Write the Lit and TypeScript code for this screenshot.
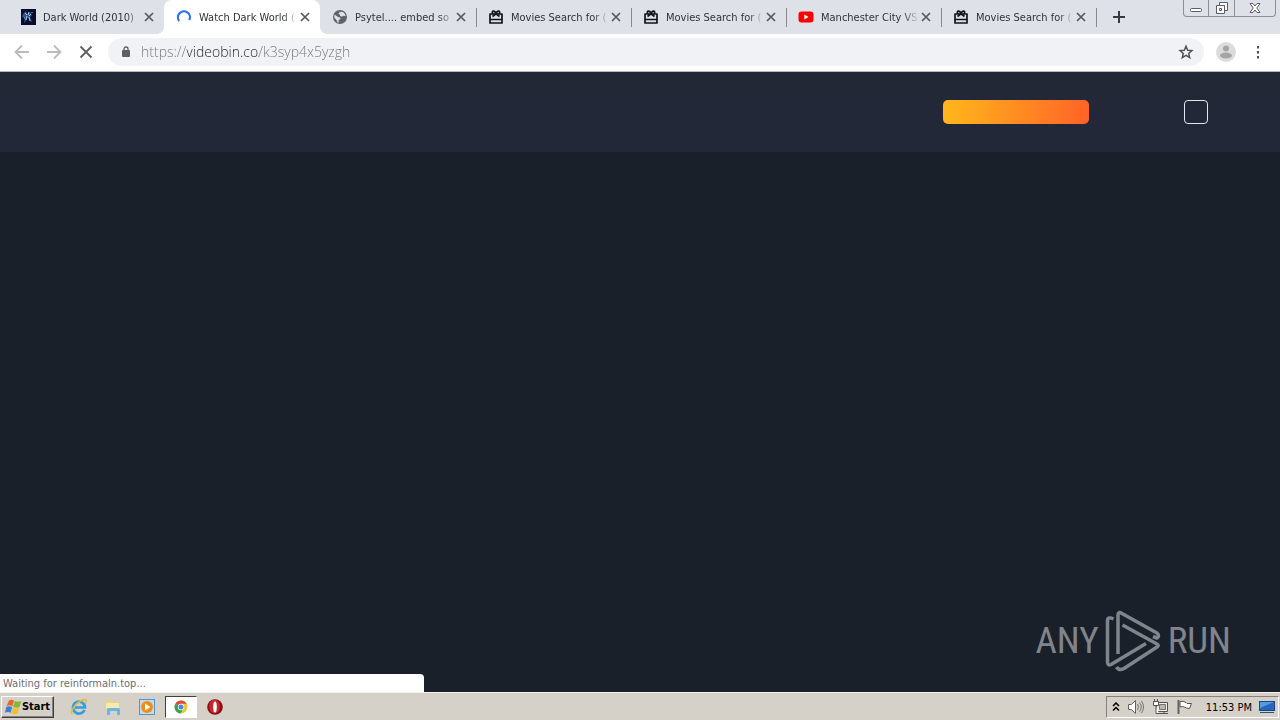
import { LitElement, html, svg, css } from "lit";
import { customElement, property, state } from "lit/decorators.js";
import { classMap } from "lit/directives/class-map.js";

type IconName = "night" | "spinner" | "globe" | "gift" | "youtube";

interface Tab {
  title: string;
  icon: IconName;
}

const TABS: Tab[] = [
  { title: "Dark World (2010)", icon: "night" },
  { title: "Watch Dark World (", icon: "spinner" },
  { title: "Psytel.... embed so", icon: "globe" },
  { title: "Movies Search for (", icon: "gift" },
  { title: "Movies Search for (", icon: "gift" },
  { title: "Manchester City VS", icon: "youtube" },
  { title: "Movies Search for (", icon: "gift" },
];

const favicons: Record<IconName, unknown> = {
  night: svg`<rect x="1" width="15" height="16" fill="#070d2c"/>
    <path d="M3 5l3-3 1 3 3-2 2 3-2 2 2 5-2-1-2-4-2 4-2 2 1-5-3-1z" fill="#31558f"/>
    <path d="M5 4l2 2M9 3l-1 3M11 5l-2 2M7 7l-1 4M9 8l1 4M4 9h1M12 3v1" stroke="#a5c4e6" stroke-width="1" fill="none"/>`,
  spinner: svg`<path d="M3.200 12A6 6 0 1 1 13.300 11" fill="none" stroke="#2a74e6" stroke-width="2.2"/>`,
  globe: svg`<circle cx="8" cy="8" r="7" fill="#5f6368"/>
    <path d="M2.500 5.500L6 8l2 .5.500 1.500-2 1 .3 2.800-1.300-.4-1-2.400-2.300-2.400z" fill="#dee1e7"/>
    <path d="M8.500 2.400l2.800.9 1.900 2.200.3 1.800-2.300-.5-1.300 1-1.800-.9-.2-1.500-1.400-.4.5-1.500 1.500-.2z" fill="#dee1e7"/>`,
  gift: svg`<path d="M2 5h12v9H2zM2 10.5h12M4.500 7.500L8 4.800l3.500 2.700M8 4.800C6.800 1 3.300 1.600 4.600 4.600M8 4.800C9.200 1 12.700 1.600 11.400 4.600" fill="none" stroke="#111418" stroke-width="1.700" stroke-linejoin="round"/>`,
  youtube: svg`<rect x="0.500" y="2.500" width="15" height="11" rx="3" fill="#f00"/><path d="M6.300 5.500v5L10.500 8z" fill="#fff"/>`,
};

const cross = html`<svg width="10" height="10" viewBox="0 0 10 10" aria-hidden="true">
  <path d="M1 1l8 8M9 1l-8 8" stroke="#55585d" stroke-width="1.700" />
</svg>`;

@customElement("browser-tab")
export class BrowserTab extends LitElement {
  @property() title = "";
  @property() icon: IconName = "globe";
  @property({ type: Boolean }) active = false;
  @property({ type: Boolean }) divided = false;

  static styles = css`
    :host {
      display: block;
      min-width: 0;
    }
    .tab {
      display: flex;
      align-items: center;
      position: relative;
      height: 34px;
      padding: 0 10px 0 12px;
      box-sizing: border-box;
    }
    .active {
      background: #fff;
      border-radius: 8px 8px 0 0;
    }
    .active::before,
    .active::after {
      content: "";
      position: absolute;
      bottom: 0;
      width: 8px;
      height: 8px;
    }
    .active::before {
      left: -8px;
      background: radial-gradient(circle at 0 0, transparent 8px, #fff 8px);
    }
    .active::after {
      right: -8px;
      background: radial-gradient(circle at 100% 0, transparent 8px, #fff 8px);
    }
    .divided::after {
      content: "";
      position: absolute;
      right: -1px;
      top: 8px;
      width: 1px;
      height: 19px;
      background: #888c92;
    }
    .favicon {
      flex: none;
      margin-right: 7px;
    }
    .title {
      flex: 1;
      min-width: 0;
      padding: 1px 0 0;
      border: 0;
      background: none;
      color: #303338;
      font: inherit;
      text-align: left;
      white-space: nowrap;
      overflow: hidden;
      -webkit-mask-image: linear-gradient(90deg, #000 84%, transparent);
      mask-image: linear-gradient(90deg, #000 84%, transparent);
    }
    .close {
      display: flex;
      flex: none;
      margin-left: 2px;
      padding: 0;
      border: 0;
      background: none;
    }
  `;

  render() {
    return html`<div class=${classMap({ tab: true, active: this.active, divided: this.divided })}>
      <svg class="favicon" width="16" height="16" viewBox="0 0 16 16" aria-hidden="true">${favicons[this.icon]}</svg>
      <button class="title" type="button">${this.title}</button>
      <button class="close" type="button" aria-label="Close tab">${cross}</button>
    </div>`;
  }
}

@customElement("any-run-mark")
export class AnyRunMark extends LitElement {
  static styles = css`
    :host {
      display: flex;
      align-items: center;
      gap: 6px;
      color: #80848b;
      font: 37px/62px "Roboto Condensed", "Liberation Sans", sans-serif;
    }
    .play {
      flex: none;
    }
  `;

  render() {
    return html`<span>ANY</span>
      <svg class="play" width="57" height="62" viewBox="0 0 57 62" aria-hidden="true">
        <g fill="none" stroke="#80848b" stroke-width="3.500" stroke-linejoin="round">
          <path d="M8.500 9Q2.500 6 2.500 11V52Q2.500 56 6 54.500L41 33.500" />
          <path d="M13 44V5Q13 1 17 3.500L52 23Q55 26 52 28L48 26.500" />
          <path d="M17.500 15L52 34Q54.500 35.500 52 37L19 58.500Q14 61 11.500 57" />
        </g>
      </svg>
      <span>RUN</span>`;
  }
}

@customElement("task-bar")
export class TaskBar extends LitElement {
  static styles = css`
    :host {
      display: flex;
      align-items: center;
      flex: none;
      height: 28px;
      box-sizing: border-box;
      padding: 1px 1px 0 1px;
      background: #d5d0c8;
      border-top: 1px solid #f4f2ee;
      color: #000;
    }
    button {
      display: flex;
      align-items: center;
      justify-content: center;
      padding: 0;
      border: 0;
      background: none;
      color: inherit;
      font: inherit;
    }
    .start {
      width: 53px;
      height: 22px;
      box-sizing: border-box;
      border: 1px solid;
      border-color: #fff #404040 #404040 #fff;
      box-shadow: inset -1px -1px #868279;
      font-weight: bold;
    }
    .pins {
      display: flex;
      gap: 2px;
      margin-left: 9px;
    }
    .pin {
      width: 32px;
      height: 22px;
    }
    .pressed {
      box-sizing: border-box;
      background: #fff;
      border: 1px solid;
      border-color: #404040 #fff #fff #404040;
    }
    .tray {
      display: flex;
      align-items: center;
      gap: 7px;
      height: 22px;
      margin-left: auto;
      padding: 0 3px 0 5px;
      box-sizing: border-box;
      border: 1px solid;
      border-color: #868279 #fff #fff #868279;
    }
    .clock {
      margin-left: 6px;
      padding-top: 1px;
      white-space: nowrap;
    }
  `;

  render() {
    return html`<button class="start" type="button">
        <svg width="17" height="16" viewBox="0 0 17 16" aria-hidden="true">
          <path d="M4 1.500q2.500-1.500 5 0L7.500 7q-3-1.500-6 0z" fill="#e9652b" />
          <path d="M9.800 2q3 1.500 6.500 0L14.500 8q-3 1.500-6.300 0z" fill="#86b92e" />
          <path d="M1.200 8q3-1.500 6 0L5.700 13.800q-3-1.500-5.700 0z" fill="#3c7fd0" />
          <path d="M8 9q3 1.500 6.200 0L12.700 14.500q-3 1.500-6.200-.3z" fill="#f5bd2a" />
        </svg>
        Start
      </button>
      <div class="pins">
        <button class="pin" type="button" aria-label="Internet Explorer">
          <svg width="18" height="18" viewBox="0 0 18 18">
            <path d="M14.500 12A6 6 0 1 1 15 9.500H5" fill="none" stroke="#35a0dd" stroke-width="2.700" />
            <path d="M2.500 16C-1 15 5 5 13 2c4-1.500 4 1 2.500 3.500" fill="none" stroke="#e7b83a" stroke-width="1.400" />
          </svg>
        </button>
        <button class="pin" type="button" aria-label="Explorer">
          <svg width="18" height="18" viewBox="0 0 18 18">
            <path d="M2 2h5l1 2h7v8H2z" fill="#ecd47c" />
            <path d="M2 5h13v5H2z" fill="#f7eab0" />
            <path d="M3 17v-5q0-2 2-2h9q2 0 2 2v5h-3v-4H6v4z" fill="#6eb4df" />
          </svg>
        </button>
        <button class="pin" type="button" aria-label="Media Player">
          <svg width="18" height="18" viewBox="0 0 18 18">
            <rect x="1.500" y="1.500" width="15" height="15" fill="#bedcf3" stroke="#5694ca" />
            <circle cx="9" cy="9" r="6" fill="#f38a1c" />
            <path d="M7 5.500v7l5.500-3.500z" fill="#fff" />
          </svg>
        </button>
        <button class="pin pressed" type="button" aria-label="Chrome">
          <svg width="16" height="16" viewBox="0 0 16 16">
            <circle cx="8" cy="8" r="6.500" fill="#f7c52c" />
            <path d="M8 8L2.400 4.700A6.500 6.500 0 0 1 13.600 4.700H8z" fill="#dd4a3a" />
            <path d="M8 8L2.400 4.700A6.500 6.500 0 0 0 7.500 14.500L10.500 9.500z" fill="#38a152" />
            <circle cx="8" cy="8" r="3.200" fill="#fff" />
            <circle cx="8" cy="8" r="2.500" fill="#4485e8" />
          </svg>
        </button>
        <button class="pin" type="button" aria-label="Opera">
          <svg width="16" height="16" viewBox="0 0 16 16">
            <circle cx="8" cy="8" r="7.800" fill="#8f0d12" />
            <ellipse cx="7.500" cy="7.500" rx="5.500" ry="6.800" fill="#c9262b" />
            <ellipse cx="8" cy="8" rx="1.800" ry="5.500" fill="#fff" />
          </svg>
        </button>
      </div>
      <div class="tray">
        <svg width="8" height="10" viewBox="0 0 8 10" aria-hidden="true">
          <path d="M1 4l3-3 3 3M1 8.500l3-3 3 3" fill="none" stroke="#000" stroke-width="1.500" />
        </svg>
        <svg width="18" height="16" viewBox="0 0 18 16" aria-hidden="true">
          <path d="M1.500 5.500h3l4-4v13l-4-4h-3z" fill="#fff" stroke="#66635e" />
          <path d="M10.500 5q2 3 0 6M12.500 3.500q3.500 4.500 0 9M14.500 2q4 6 0 12" fill="none" stroke="#77746e" />
        </svg>
        <svg width="17" height="16" viewBox="0 0 17 16" aria-hidden="true">
          <path d="M4.500 3.500h11v9h-11zM7 14.500h9M12 13v2" fill="#eee" stroke="#55534f" />
          <path d="M7.500 5.500h6v5h-6z" fill="#bbb7b0" stroke="#77746e" />
          <path d="M1.500 2.500h5v4h-5zM2.500 0v2M5.500 0v2M4 7v7.500h3" fill="#fff" stroke="#55534f" />
        </svg>
        <svg width="17" height="16" viewBox="0 0 17 16" aria-hidden="true">
          <path d="M2.500 1v14" stroke="#66635e" stroke-width="2" />
          <path d="M4 2.500q3-1 6 1l1 1h4.500l-2 5q-3 0-5-1.500-2-1-4.500 0z" fill="#fff" stroke="#55534f" />
        </svg>
        <time class="clock">11:53 PM</time>
        <svg width="16" height="14" viewBox="0 0 16 14" aria-hidden="true">
          <rect x="0.500" y="1.500" width="15" height="9" fill="#2467bd" stroke="#164887" />
          <path d="M1 2h14L1 8z" fill="#5a9be0" />
          <path d="M1 12.500h14" stroke="#34506f" />
        </svg>
      </div>`;
  }
}

@customElement("app-root")
export class AppRoot extends LitElement {
  @state() private current = 1;

  static styles = css`
    :host {
      display: flex;
      flex-direction: column;
      height: 100vh;
      overflow: hidden;
      position: relative;
      font: 11px/14px "DejaVu Sans Condensed", "DejaVu Sans", sans-serif;
    }
    .strip {
      display: flex;
      flex: none;
      height: 34px;
      background: #dee1e7;
      padding-left: 8px;
    }
    .tabs {
      display: flex;
      flex: 0 1 1088px;
      min-width: 0;
    }
    .tabs browser-tab {
      flex: 0 1 155px;
    }
    .tabs .lead {
      flex-basis: 156px;
    }
    .icon {
      display: flex;
      align-items: center;
      justify-content: center;
      flex: none;
      padding: 0;
      border: 0;
      background: none;
    }
    .add {
      width: 46px;
    }
    .window {
      display: flex;
      flex: none;
      width: 93px;
      height: 17px;
      margin: 0 4px 0 auto;
      box-sizing: border-box;
      border: 1px solid #8b8f96;
      border-top: 0;
      border-radius: 0 0 4px 4px;
    }
    .window .icon {
      flex: 25;
    }
    .window .icon + .icon {
      border-left: 1px solid #8b8f96;
    }
    .window .icon:last-child {
      flex: 41;
    }
    .toolbar {
      display: flex;
      align-items: center;
      flex: none;
      height: 38px;
      padding: 0 12px 1px 6px;
      box-sizing: border-box;
      background: #fff;
      border-bottom: 1px solid #b4b9bf;
    }
    .toolbar .icon {
      width: 32px;
      height: 32px;
    }
    .address {
      display: flex;
      align-items: center;
      flex: 1;
      height: 28px;
      margin: 0 6px;
      padding: 0 2px 0 12px;
      border-radius: 14px;
      background: #f0f2f5;
    }
    .url {
      flex: 1;
      min-width: 0;
      margin-left: 9px;
      padding: 0;
      border: 0;
      outline: 0;
      color: transparent;
      background: linear-gradient(90deg, #72767b 46px, #202124 46px, #202124 118px, #72767b 118px);
      -webkit-background-clip: text;
      background-clip: text;
      font: 300 14px/20px "Open Sans", "Noto Sans", sans-serif;
    }
    .toolbar .menu {
      width: 20px;
      margin-left: 6px;
    }
    .page {
      display: flex;
      flex-direction: column;
      flex: 1;
      min-height: 0;
      background: #1a202a;
    }
    .banner {
      display: flex;
      align-items: center;
      justify-content: flex-end;
      gap: 95px;
      flex: none;
      height: 80px;
      padding: 0 72px;
      background: linear-gradient(#1f2a36, #222836 12px, #222838);
    }
    .promo {
      width: 146px;
      height: 24px;
      padding: 0;
      border: 0;
      border-radius: 5px;
      background: linear-gradient(90deg, #ffb71b, #ff6328);
    }
    .toggle {
      width: 24px;
      height: 24px;
      padding: 0;
      box-sizing: border-box;
      border: 1px solid #e4e6ea;
      border-radius: 4px;
      background: none;
    }
    .status {
      width: 424px;
      max-width: 100%;
      margin-top: auto;
      padding: 3px 3px 1px;
      box-sizing: border-box;
      border-radius: 0 4px 0 0;
      background: #fff;
      color: #6c6f73;
    }
    .mark {
      position: absolute;
      right: 49px;
      bottom: 48px;
    }
  `;

  render() {
    return html`<nav class="strip">
        <div class="tabs">
          ${TABS.map(
            (tab, i) => html`<browser-tab
              class=${classMap({ lead: i < 3 })}
              .title=${tab.title}
              .icon=${tab.icon}
              ?active=${i === this.current}
              ?divided=${i !== this.current && i !== this.current - 1}
              @click=${() => (this.current = i)}
            ></browser-tab>`,
          )}
        </div>
        <button class="icon add" type="button" aria-label="New tab">
          <svg width="14" height="14" viewBox="0 0 14 14"><path d="M7 1v12M1 7h12" stroke="#333a48" stroke-width="2" /></svg>
        </button>
        <div class="window">
          <button class="icon" type="button" aria-label="Minimize">
            <svg width="12" height="12" viewBox="0 0 12 12"><rect x="0.500" y="6.500" width="11" height="3" rx="1" fill="#fff" stroke="#5a5e66" /></svg>
          </button>
          <button class="icon" type="button" aria-label="Restore">
            <svg width="14" height="14" viewBox="0 0 14 14">
              <path d="M4.500 1.500h8v8h-8z" fill="#fff" stroke="#5a5e66" />
              <path d="M1.500 4.500h8v8h-8zM4.500 7.500h2v2h-2z" fill="#fff" stroke="#5a5e66" />
            </svg>
          </button>
          <button class="icon" type="button" aria-label="Close window">
            <svg width="12" height="12" viewBox="0 0 12 12"><path d="M1 1.500h3l2 2.500 2-2.500h3L7.800 6l3.200 4.500H8L6 8l-2 2.500H1L4.200 6z" fill="#fff" stroke="#5a5e66" /></svg>
          </button>
        </div>
      </nav>
      <div class="toolbar">
        <button class="icon" type="button" aria-label="Back">
          <svg width="16" height="16" viewBox="0 0 16 16"><path d="M15 8H2M8 1.500L1.500 8 8 14.500" fill="none" stroke="#b9bbbe" stroke-width="1.800" /></svg>
        </button>
        <button class="icon" type="button" aria-label="Forward">
          <svg width="16" height="16" viewBox="0 0 16 16"><path d="M1 8h13M8 1.500L14.500 8 8 14.500" fill="none" stroke="#b9bbbe" stroke-width="1.800" /></svg>
        </button>
        <button class="icon" type="button" aria-label="Stop">
          <svg width="14" height="14" viewBox="0 0 14 14"><path d="M1.500 1.500l11 11M12.500 1.500l-11 11" stroke="#5b5e63" stroke-width="1.800" /></svg>
        </button>
        <div class="address">
          <svg width="12" height="14" viewBox="0 0 12 14" aria-hidden="true">
            <rect x="2" y="5" width="8" height="7" rx="1" fill="#5b5e63" />
            <path d="M4 5.500V4a2 2 0 0 1 4 0v1.500" fill="none" stroke="#5b5e63" stroke-width="1.300" />
          </svg>
          <input class="url" type="text" aria-label="Address" spellcheck="false" .value=${"https://videobin.co/k3syp4x5yzgh"} />
          <button class="icon" type="button" aria-label="Bookmark">
            <svg width="16" height="16" viewBox="0 0 16 16"><path d="M8 2.200l1.700 4 4.200.4-3.200 2.800 1 4.200L8 11.400l-3.700 2.200 1-4.200-3.200-2.800 4.200-.4z" fill="none" stroke="#50545a" stroke-width="1.500" /></svg>
          </button>
        </div>
        <button class="icon" type="button" aria-label="Profile">
          <svg width="20" height="20" viewBox="0 0 20 20">
            <circle cx="10" cy="10" r="10" fill="#dcdcdd" />
            <circle cx="10" cy="6.500" r="3" fill="#a3a4a6" />
            <ellipse cx="10" cy="13.500" rx="6" ry="3" fill="#a3a4a6" />
          </svg>
        </button>
        <button class="icon menu" type="button" aria-label="Menu">
          <svg width="4" height="14" viewBox="0 0 4 14"><path d="M1 1h2v2.500H1zM1 6h2v2.500H1zM1 11h2v2.500H1z" fill="#4c5056" /></svg>
        </button>
      </div>
      <main class="page">
        <header class="banner">
          <button class="promo" type="button" aria-label="Upgrade"></button>
          <button class="toggle" type="button" aria-label="Menu"></button>
        </header>
        <div class="status" role="status">Waiting for reinformaln.top...</div>
      </main>
      <task-bar></task-bar>
      <any-run-mark class="mark"></any-run-mark>`;
  }
}
